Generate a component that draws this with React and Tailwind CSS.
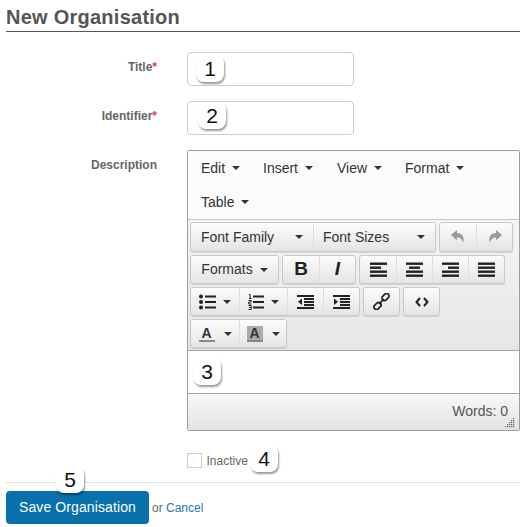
import React from "react";

const Caret = () => (
  <span className="inline-block w-0 h-0 border-x-[4px] border-x-transparent border-t-[4px] border-t-[#333]" />
);

const Bars = ({ rows }) => (
  <svg width="17" height="15" viewBox="0 0 17 15" fill="#222">
    {rows.map(([x, w], i) => (
      <rect key={i} x={x} y={i * 4 + 0.5} width={w} height="2.4" />
    ))}
  </svg>
);

const Btn = ({ w, children, first, extra = "justify-center" }) => (
  <div
    className={`flex items-center h-full border-[#ddd] ${first ? "" : "border-l"} ${extra}`}
    style={{ width: w }}
  >
    {children}
  </div>
);

const Group = ({ children, tall }) => (
  <div className={`flex ${tall ? "h-[30px]" : "h-[29px]"} rounded-[3px] border border-[#c9c9c9] bg-gradient-to-b from-[#fcfcfc] to-[#e4e4e4] shadow-[0_1px_1px_rgba(0,0,0,0.12)]`}>
    {children}
  </div>
);

const MenuItem = ({ label, className = "" }) => (
  <div className={`flex items-center gap-[7px] text-[14px] text-[#333] ${className}`}>
    <span>{label}</span>
    <Caret />
  </div>
);

const Badge = ({ n, className }) => (
  <div className={`absolute flex items-center justify-center w-[28px] h-[27px] rounded-[8px] bg-white text-[#111] text-[21px] shadow-[1px_2px_2px_rgba(0,0,0,0.4)] ${className}`}>
    {n}
  </div>
);

const Row = ({ label, top }) => (
  <div className={`flex ${top}`}>
    <label className="w-[151px] pt-[6px] text-right text-[12px] font-bold text-[#666]">
      {label}
      <span className="text-[#e8364f]">*</span>
    </label>
    <div className="ml-[30px] w-[167px] h-[34px] rounded-[4px] border border-[#ccc] bg-white" />
  </div>
);

export default function App() {
  return (
    <div
      className="relative w-[527px] h-[527px] overflow-hidden bg-white px-[6px] pt-[7px]"
      style={{ fontFamily: '"Liberation Sans", Arial, sans-serif' }}
    >
      <h1 className="h-[25px] w-[514px] border-b border-[#555] text-[20px] leading-[21px] font-bold tracking-[0.25px] text-[#555]">
        New Organisation
      </h1>

      <Row label="Title" top="mt-[20px]" />
      <Row label="Identifier" top="mt-[15px]" />

      <div className="flex mt-[15px]">
        <label className="w-[151px] pt-[6px] text-right text-[12px] font-bold text-[#666]">Description</label>
        <div className="ml-[30px] w-[333px] h-[281px] flex flex-col border border-[#9e9e9e] rounded-[2px]">
          <div className="h-[69px] bg-[#fbfbfb] px-[13px] border-b border-[#c5c5c5]">
            <div className="flex h-[34px] items-center">
              <MenuItem label="Edit" className="w-[62px]" />
              <MenuItem label="Insert" className="w-[74px]" />
              <MenuItem label="View" className="w-[68px]" />
              <MenuItem label="Format" />
            </div>
            <div className="flex h-[34px] items-center">
              <MenuItem label="Table" />
            </div>
          </div>

          <div className="h-[131px] bg-gradient-to-b from-[#f5f5f5] to-[#e6e6e6] px-[2px] pt-[2px] flex flex-col gap-[3px] border-b border-[#a5a5a5]">
            <div className="flex gap-[3px]">
              <Group tall>
                <Btn w={122} first extra="pl-[10px] pr-[10px] justify-between text-[14px] text-[#333]">
                  <span>Font Family</span>
                  <Caret />
                </Btn>
                <Btn w={122} extra="pl-[9px] pr-[10px] justify-between text-[14px] text-[#333]">
                  <span>Font Sizes</span>
                  <Caret />
                </Btn>
              </Group>
              <Group tall>
                <Btn w={36} first>
                  <svg width="16" height="16" viewBox="0 0 16 16" fill="#9a9a9a">
                    <path d="M1 6 L7 1 V4 C12 4 15 8 13 14 C12 10 10 8.5 7 8.5 V11.5 Z" />
                  </svg>
                </Btn>
                <Btn w={36}>
                  <svg width="16" height="16" viewBox="0 0 16 16" fill="#9a9a9a">
                    <path d="M15 6 L9 1 V4 C4 4 1 8 3 14 C4 10 6 8.5 9 8.5 V11.5 Z" />
                  </svg>
                </Btn>
              </Group>
            </div>

            <div className="flex gap-[3px]">
              <Group>
                <Btn w={87} first extra="justify-center gap-[7px] text-[14px] text-[#333]">
                  <span>Formats</span>
                  <Caret />
                </Btn>
              </Group>
              <Group>
                <Btn w={36} first extra="justify-center text-[19px] font-bold text-[#222]">B</Btn>
                <Btn w={36} extra="justify-center text-[19px] font-bold italic text-[#222]">I</Btn>
              </Group>
              <Group>
                <Btn w={36} first><Bars rows={[[0, 17], [0, 11], [0, 17], [0, 17]]} /></Btn>
                <Btn w={36}><Bars rows={[[0, 17], [3, 11], [0, 17], [0, 17]]} /></Btn>
                <Btn w={36}><Bars rows={[[0, 17], [6, 11], [0, 17], [0, 17]]} /></Btn>
                <Btn w={36}><Bars rows={[[0, 17], [0, 17], [0, 17], [0, 17]]} /></Btn>
              </Group>
            </div>

            <div className="flex gap-[3px]">
              <Group>
                <Btn w={48} first extra="justify-center gap-[7px]">
                  <svg width="17" height="16" viewBox="0 0 17 16" fill="#222">
                    <circle cx="2" cy="2.5" r="2" />
                    <circle cx="2" cy="8" r="2" />
                    <circle cx="2" cy="13.5" r="2" />
                    <rect x="6" y="1.5" width="11" height="2" />
                    <rect x="6" y="7" width="11" height="2" />
                    <rect x="6" y="12.5" width="11" height="2" />
                  </svg>
                  <Caret />
                </Btn>
                <Btn w={48} extra="justify-center gap-[7px]">
                  <svg width="16" height="16" viewBox="0 0 16 16" fill="none" stroke="#222">
                    <path d="M1 0.5 H2.2 V4 M1 4.5 H3.5" strokeWidth="1" />
                    <path d="M0.5 6.5 H3.2 V8 H0.7 V10 H3.5" strokeWidth="1" />
                    <path d="M0.5 11.5 H3.2 V15.5 H0.5 M1 13.5 H3" strokeWidth="1" />
                    <path d="M5 2.5 H16 M5 8 H16 M5 13.5 H16" strokeWidth="2" />
                  </svg>
                  <Caret />
                </Btn>
                <Btn w={36}>
                  <svg width="17" height="14" viewBox="0 0 17 14" fill="#222">
                    <rect x="0" y="0" width="17" height="2" />
                    <rect x="7" y="3" width="10" height="2" />
                    <rect x="7" y="6" width="10" height="2" />
                    <rect x="7" y="9" width="10" height="2" />
                    <rect x="0" y="12" width="17" height="2" />
                    <path d="M5 3.5 V10 L1 6.7 Z" />
                  </svg>
                </Btn>
                <Btn w={36}>
                  <svg width="17" height="14" viewBox="0 0 17 14" fill="#222">
                    <rect x="0" y="0" width="17" height="2" />
                    <rect x="7" y="3" width="10" height="2" />
                    <rect x="7" y="6" width="10" height="2" />
                    <rect x="7" y="9" width="10" height="2" />
                    <rect x="0" y="12" width="17" height="2" />
                    <path d="M1 3.5 V10 L5 6.7 Z" />
                  </svg>
                </Btn>
              </Group>
              <Group>
                <Btn w={35} first>
                  <svg width="17" height="17" viewBox="0 0 17 17" fill="none" stroke="#222" strokeWidth="1.7">
                    <rect x="8.5" y="1.5" width="8" height="5" rx="2.5" transform="rotate(-45 12.5 4)" />
                    <rect x="0.5" y="10.5" width="8" height="5" rx="2.5" transform="rotate(-45 4.5 13)" />
                    <path d="M6 11 L11 6" />
                  </svg>
                </Btn>
              </Group>
              <Group>
                <Btn w={35} first>
                  <svg width="14" height="10" viewBox="0 0 14 10" fill="none" stroke="#222" strokeWidth="2">
                    <path d="M5 1 L1.5 5 L5 9" />
                    <path d="M9 1 L12.5 5 L9 9" />
                  </svg>
                </Btn>
              </Group>
            </div>

            <div className="flex gap-[3px]">
              <Group>
                <Btn w={48} first extra="justify-center gap-[9px]">
                  <div className="flex flex-col items-center w-[16px] text-[14px] leading-[14px] font-bold text-[#333]">
                    <span>A</span>
                    <span className="block w-[16px] h-[2px] bg-[#888]" />
                  </div>
                  <Caret />
                </Btn>
                <Btn w={47} extra="justify-center gap-[9px]">
                  <div className="flex flex-col items-center w-[16px] bg-[#aaa] text-[14px] leading-[14px] font-bold text-[#333]">
                    <span>A</span>
                    <span className="block w-[16px] h-[2px] bg-[#888]" />
                  </div>
                  <Caret />
                </Btn>
              </Group>
            </div>
          </div>

          <div className="h-[43px] bg-white border-b border-[#a5a5a5]" />

          <div className="relative flex-1 flex items-center justify-end pr-[11px] pb-[1px] bg-gradient-to-b from-[#f8f8f8] to-[#e2e2e2] text-[14px] text-[#555]">
            Words: 0
            <svg className="absolute right-[4px] bottom-[2px]" width="10" height="10" viewBox="0 0 10 10" fill="#7a5a5a">
              <rect x="8" y="0" width="1.2" height="1.2" />
              <rect x="6" y="2" width="1.2" height="1.2" />
              <rect x="8" y="2" width="1.2" height="1.2" />
              <rect x="4" y="4" width="1.2" height="1.2" />
              <rect x="6" y="4" width="1.2" height="1.2" />
              <rect x="8" y="4" width="1.2" height="1.2" />
              <rect x="2" y="6" width="1.2" height="1.2" />
              <rect x="4" y="6" width="1.2" height="1.2" />
              <rect x="6" y="6" width="1.2" height="1.2" />
              <rect x="8" y="6" width="1.2" height="1.2" />
              <rect x="0" y="8" width="1.2" height="1.2" />
              <rect x="2" y="8" width="1.2" height="1.2" />
              <rect x="4" y="8" width="1.2" height="1.2" />
              <rect x="6" y="8" width="1.2" height="1.2" />
              <rect x="8" y="8" width="1.2" height="1.2" />
            </svg>
          </div>
        </div>
      </div>

      <div className="flex items-center ml-[180.5px] mt-[22px] h-[15px] gap-[5px]">
        <span className="block w-[15px] h-[15px] border border-[#ccc] bg-white" />
        <span className="text-[12px] text-[#666]">Inactive</span>
      </div>

      <div className="w-[514px] h-px bg-[#e2e2e2] mt-[14px]" />

      <div className="flex items-center mt-[8px] gap-[3px]">
        <button className="w-[143px] h-[33px] rounded-[4px] bg-[#0870aa] text-white text-[14px] tracking-[0.1px]">
          Save Organisation
        </button>
        <span className="text-[12px] text-[#666]">
          or <span className="text-[#2a77b8]">Cancel</span>
        </span>
      </div>

      <Badge n="1" className="left-[196px] top-[55px]" />
      <Badge n="2" className="left-[198px] top-[102px]" />
      <Badge n="3" className="left-[193px] top-[358px]" />
      <Badge n="4" className="left-[250px] top-[445px]" />
      <Badge n="5" className="left-[56px] top-[466px]" />
    </div>
  );
}
